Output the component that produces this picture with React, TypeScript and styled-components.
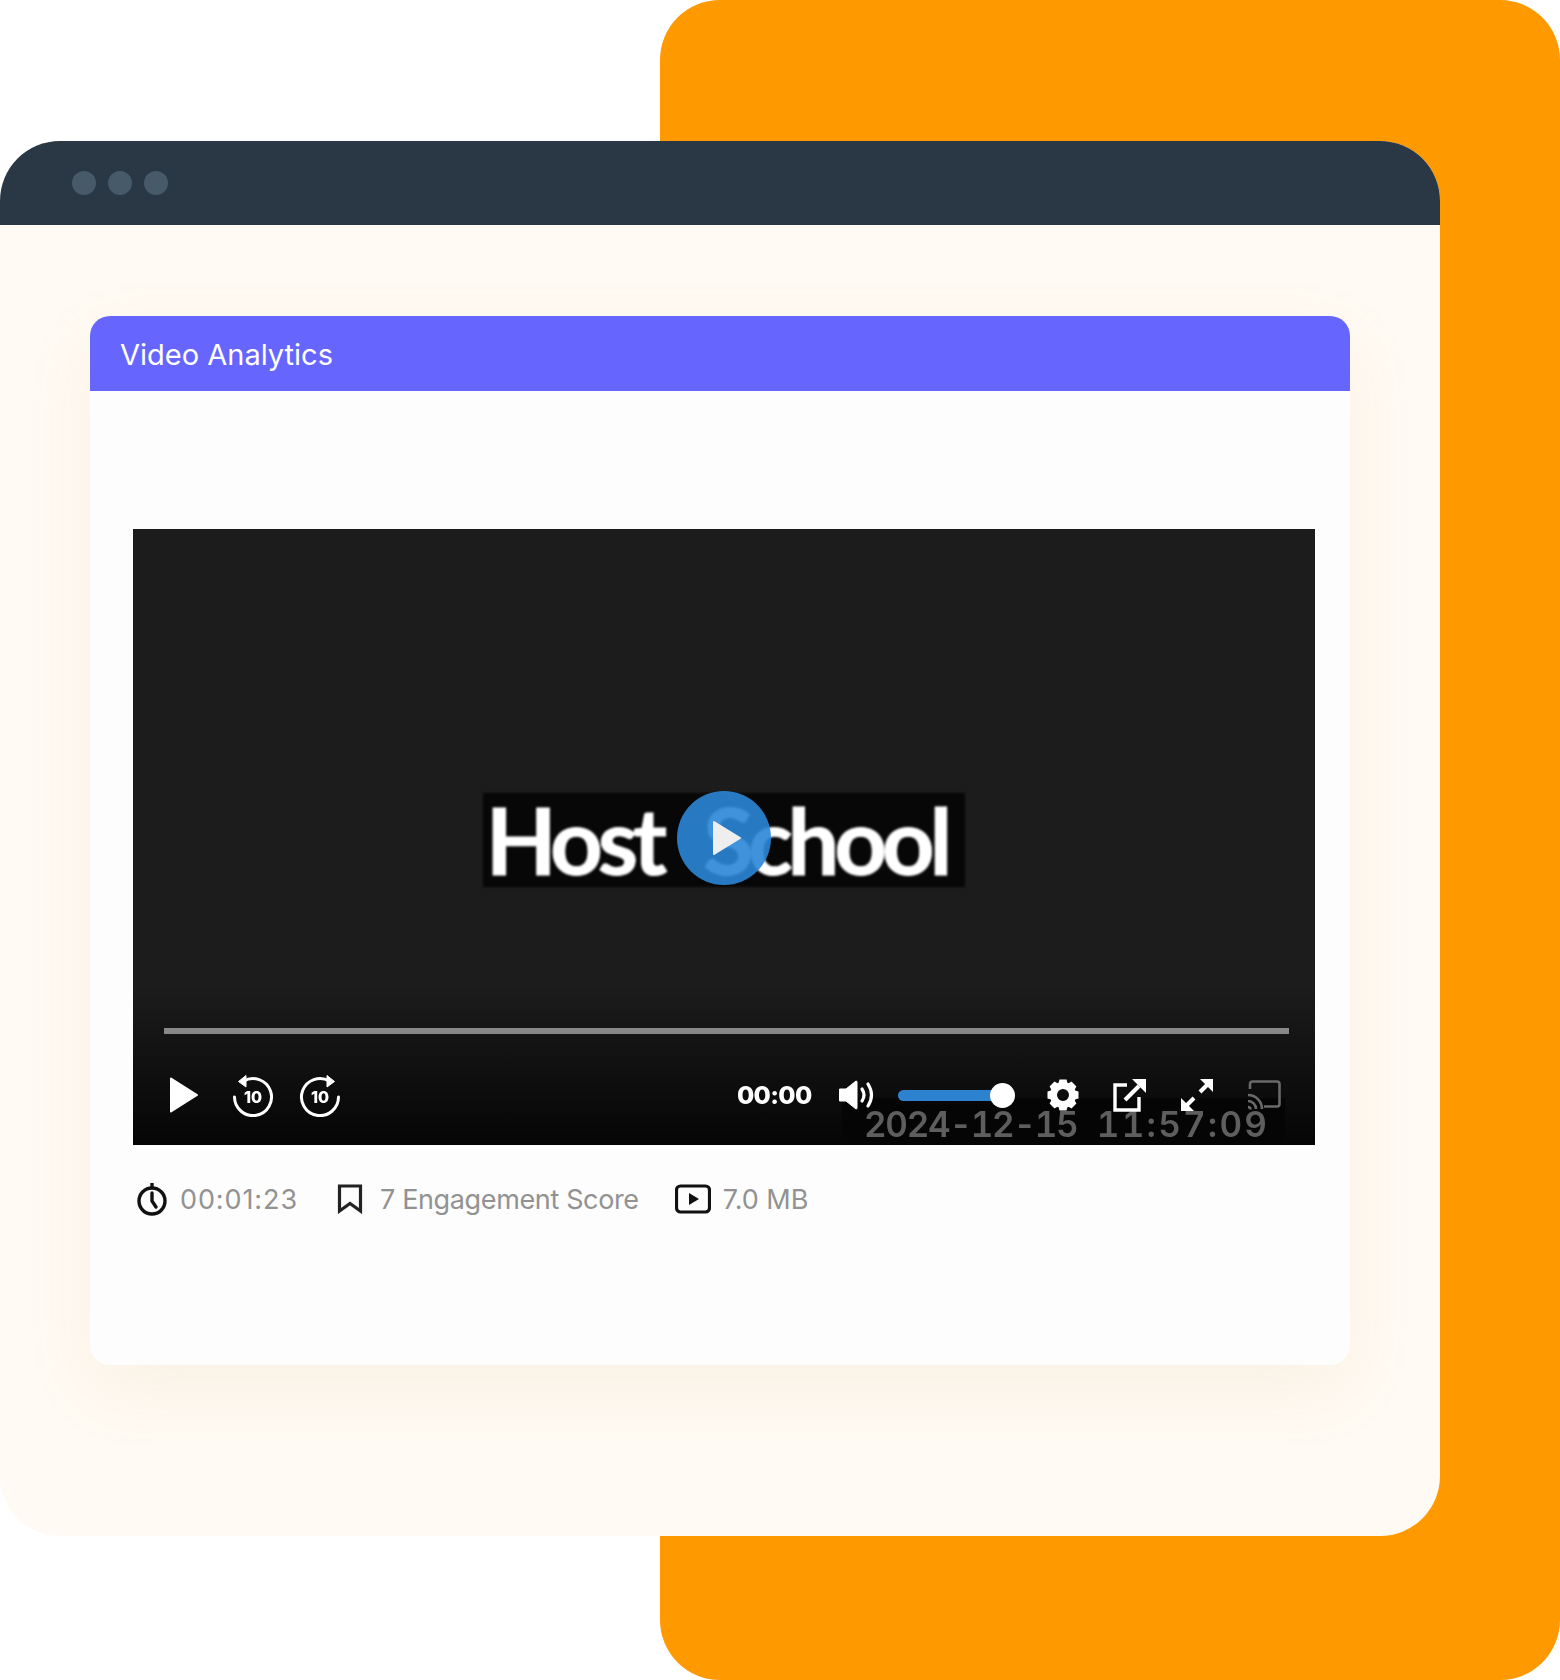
import React from "react";
import styled, { createGlobalStyle } from "styled-components";

const Global = createGlobalStyle`
  html, body { margin: 0; padding: 0; background: #fff; }
  body { font-family: "Inter", "Liberation Sans", sans-serif; }
`;

const Stage = styled.div`
  display: grid;
  width: 1560px;
  height: 1680px;
  overflow: hidden;
`;

const OrangePanel = styled.div`
  grid-area: 1 / 1;
  margin-left: 660px;
  border-radius: 60px;
  background: #ff9900;
`;

const Window = styled.section`
  grid-area: 1 / 1;
  align-self: start;
  display: flex;
  flex-direction: column;
  width: 1440px;
  height: 1395px;
  margin-top: 141px;
  border-radius: 60px;
  overflow: hidden;
  background: #fffaf3;
`;

const TitleBar = styled.div`
  display: flex;
  align-items: center;
  gap: 12px;
  flex: none;
  height: 84px;
  padding-left: 72px;
  background: #2a3744;
`;

const Dot = styled.span`
  width: 24px;
  height: 24px;
  border-radius: 50%;
  background: #475a69;
`;

const WindowBody = styled.div`
  flex: 1;
  padding: 91px 90px 0;
`;

const Card = styled.div`
  display: flex;
  flex-direction: column;
  height: 1049px;
  border-radius: 20px;
  background: #fdfdfd;
  box-shadow: 0 24px 70px rgba(190, 160, 90, 0.09);
`;

const CardHeader = styled.h2`
  flex: none;
  box-sizing: border-box;
  display: flex;
  align-items: center;
  height: 75px;
  margin: 0;
  padding: 1px 0 0 30px;
  border-radius: 20px 20px 0 0;
  background: #6666ff;
  color: #fff;
  font-size: 29px;
  font-weight: 400;
`;

const CardBody = styled.div`
  padding: 138px 35px 0 43px;
`;

const Video = styled.div`
  position: relative;
  display: flex;
  flex-direction: column;
  height: 616px;
  overflow: hidden;
  background: linear-gradient(#1c1c1c 0, #1c1c1c 74%, #050505 100%);
`;

const LogoBand = styled.div`
  align-self: center;
  display: flex;
  align-items: center;
  justify-content: center;
  box-sizing: border-box;
  width: 482px;
  height: 94px;
  margin-top: 264px;
  padding-right: 15px;
  background: #070707;
  filter: blur(1.2px);
  color: #fff;
  font-family: "Lato", sans-serif;
  font-size: 92px;
  font-weight: 700;
  letter-spacing: -5.2px;
  word-spacing: 24px;
  line-height: 1;
  -webkit-text-stroke: 1px #fff;
`;

const BigPlay = styled.button`
  position: absolute;
  left: 544px;
  top: 262px;
  display: flex;
  align-items: center;
  justify-content: center;
  width: 94px;
  height: 94px;
  padding: 0 0 0 6px;
  border: 0;
  border-radius: 50%;
  background: rgba(43, 135, 215, 0.9);
`;

const Progress = styled.div`
  flex: none;
  height: 6px;
  margin: 141px 26px 0 31px;
  background: #888;
`;

const Controls = styled.div`
  position: relative;
  z-index: 1;
  display: flex;
  align-items: center;
  height: 62px;
  margin-top: 30px;
  padding-left: 36px;
  color: #fff;
  filter: blur(0.4px);
`;

const Ctl = styled.span<{ $ml?: number }>`
  display: flex;
  flex: none;
  margin-left: ${(p) => p.$ml ?? 0}px;
`;

const Clock = styled.span`
  margin-left: 395px;
  font-family: "Inter", sans-serif;
  font-size: 25px;
  font-weight: 800;
  letter-spacing: -0.7px;
`;

const Slider = styled.div`
  position: relative;
  flex: none;
  width: 105px;
  height: 11px;
  margin-left: 22px;
  border-radius: 6px;
  background: #2d82cf;
`;

const Knob = styled.span`
  position: absolute;
  right: -12px;
  top: -7px;
  width: 25px;
  height: 25px;
  border-radius: 50%;
  background: #fff;
`;

const Stamp = styled.div`
  position: absolute;
  left: 709px;
  bottom: 0;
  box-sizing: border-box;
  width: 443px;
  height: 47px;
  padding-left: 22px;
  background: #050505;
  color: #5e5e5e;
  font-family: "Inter", sans-serif;
  font-size: 35px;
  font-weight: 600;
  font-feature-settings: "tnum";
  line-height: 53px;
  white-space: pre;
  filter: blur(0.6px);
`;

const StampPart = styled.span<{ $track: number; $ml?: number }>`
  margin-left: ${(p) => p.$ml ?? 0}px;
  letter-spacing: ${(p) => p.$track}px;
`;

const OverControls = styled.div`
  position: absolute;
  z-index: 1;
  right: 34px;
  bottom: 33px;
  display: flex;
  align-items: center;
  gap: 33px;
  color: #fff;
  filter: blur(0.4px);
`;

const Meta = styled.div`
  display: flex;
  align-items: center;
  height: 54px;
  margin-top: 27px;
  padding-left: 3px;
`;

const MetaItem = styled.div<{ $ml?: number; $gap: number; $track?: number }>`
  display: flex;
  align-items: center;
  gap: ${(p) => p.$gap}px;
  margin-left: ${(p) => p.$ml ?? 0}px;
  color: #929292;
  font-size: 27px;
  font-weight: 400;
  letter-spacing: ${(p) => p.$track ?? 0}px;
  white-space: nowrap;
`;

const PlayGlyph = () => (
  <svg width="30" height="38" viewBox="0 0 30 38"><path d="M2 2.5 L28 19 L2 35.5 Z" fill="#fff" stroke="#fff" strokeWidth="2" strokeLinejoin="round" /></svg>
);

const Skip = ({ flip }: { flip?: boolean }) => (
  <svg width="44" height="44" viewBox="0 0 44 44">
    <g transform={flip ? "translate(44 0) scale(-1 1)" : undefined} fill="none" stroke="#fff" strokeWidth="3">
      <path d="M12.5 8.2 A18.5 18.5 0 1 1 3.5 24" strokeLinecap="round" />
      <path d="M15 2.5 L7.5 8.5 L15 14 Z" fill="#fff" strokeWidth="1" strokeLinejoin="round" />
    </g>
    <text x="22" y="30" textAnchor="middle" fontFamily="Inter, sans-serif" fontWeight="800" fontSize="16" fill="#fff">10</text>
  </svg>
);

const Volume = () => (
  <svg width="38" height="34" viewBox="0 0 38 34" fill="none">
    <path d="M1.5 11 H8 L18 3 a1 1 0 0 1 1 1 V30 a1 1 0 0 1-1 1 L8 23 H1.5 Z" fill="#fff" stroke="#fff" strokeLinejoin="round" />
    <path d="M24 11 Q28 17 24 23" stroke="#fff" strokeWidth="3.2" strokeLinecap="round" />
    <path d="M30 6 Q37 17 30 28" stroke="#fff" strokeWidth="3.2" strokeLinecap="round" />
  </svg>
);

const Gear = () => (
  <svg width="34" height="34" viewBox="0 0 34 34">
    <circle cx="17" cy="17" r="9.5" fill="none" stroke="#fff" strokeWidth="7" />
    {[0, 45, 90, 135, 180, 225, 270, 315].map((a) => (
      <path key={a} d="M13.5 1.5 H20.5 L22 7 H12 Z" fill="#fff" transform={`rotate(${a} 17 17)`} />
    ))}
  </svg>
);

const Share = () => (
  <svg width="34" height="34" viewBox="0 0 34 34" fill="none" stroke="#fff" strokeWidth="3.4">
    <path d="M14 7 H2 V32 H26 V19" />
    <path d="M12 22 L26 8" strokeWidth="4" />
    <path d="M19 1 H33 V15 Z" fill="#fff" strokeWidth="0" />
  </svg>
);

const Expand = () => (
  <svg width="34" height="34" viewBox="0 0 34 34" fill="none" stroke="#fff" strokeWidth="4">
    <path d="M20 14 L28 6" />
    <path d="M20 1 H33 V14 Z" fill="#fff" strokeWidth="0" />
    <path d="M14 20 L6 28" />
    <path d="M1 20 V33 H14 Z" fill="#fff" strokeWidth="0" />
  </svg>
);

const Cast = () => (
  <svg width="34" height="30" viewBox="0 0 34 30" fill="none" stroke="#6a6a6a" strokeWidth="2.6">
    <path d="M3 9 V4 a2.5 2.5 0 0 1 2.5-2.5 H30 a2.5 2.5 0 0 1 2.5 2.5 V24 a2.5 2.5 0 0 1-2.5 2.5 H17" />
    <path d="M1 27 a2.5 2.5 0 0 1 2.5 2.5 M1 21 a8 8 0 0 1 8 8 M1 15 a14 14 0 0 1 14 14" />
  </svg>
);

const StopWatch = () => (
  <svg width="32" height="34" viewBox="0 0 32 34" fill="none" stroke="#111" strokeWidth="3.4">
    <circle cx="16" cy="19" r="13" />
    <path d="M16 1 V6" />
    <path d="M16 11 V19 L20 25" strokeLinecap="round" />
  </svg>
);

const Bookmark = () => (
  <svg width="26" height="30" viewBox="0 0 26 30" fill="none" stroke="#222" strokeWidth="3.2">
    <path d="M2.5 2 H23.5 V27 L13 19.5 L2.5 27 Z" strokeLinejoin="miter" />
  </svg>
);

const PlayBox = () => (
  <svg width="36" height="30" viewBox="0 0 36 30" fill="none">
    <rect x="1.5" y="2" width="33" height="26" rx="4" stroke="#111" strokeWidth="3.2" />
    <path d="M14 9 L24 15 L14 21 Z" fill="#111" />
  </svg>
);

export default function App() {
  return (
    <>
      <Global />
      <Stage>
        <OrangePanel />
        <Window>
          <TitleBar>
            <Dot />
            <Dot />
            <Dot />
          </TitleBar>
          <WindowBody>
            <Card>
              <CardHeader>Video Analytics</CardHeader>
              <CardBody>
                <Video>
                  <LogoBand>Host School</LogoBand>
                  <BigPlay aria-label="Play">
                    <svg width="30" height="36" viewBox="0 0 30 36">
                      <path d="M2 2 L28 18 L2 34 Z" fill="#eee" stroke="#eee" strokeWidth="2" strokeLinejoin="round" />
                    </svg>
                  </BigPlay>
                  <Progress />
                  <Stamp>
                    <StampPart $track={-1.3}>2024-12-15</StampPart>{" "}
                    <StampPart $track={2.2} $ml={10}>11:57:09</StampPart>
                  </Stamp>
                  <Controls>
                    <Ctl><PlayGlyph /></Ctl>
                    <Ctl $ml={32}><Skip /></Ctl>
                    <Ctl $ml={23}><Skip flip /></Ctl>
                    <Clock>00:00</Clock>
                    <Ctl $ml={26}><Volume /></Ctl>
                    <Slider><Knob /></Slider>
                  </Controls>
                  <OverControls>
                    <Gear />
                    <Share />
                    <Expand />
                    <Cast />
                  </OverControls>
                </Video>
                <Meta>
                  <MetaItem $gap={12} $track={0.9}><StopWatch />00:01:23</MetaItem>
                  <MetaItem $ml={39} $gap={17} $track={-0.36}><Bookmark />7 Engagement Score</MetaItem>
                  <MetaItem $ml={36} $gap={12}><PlayBox />7.0 MB</MetaItem>
                </Meta>
              </CardBody>
            </Card>
          </WindowBody>
        </Window>
      </Stage>
    </>
  );
}
